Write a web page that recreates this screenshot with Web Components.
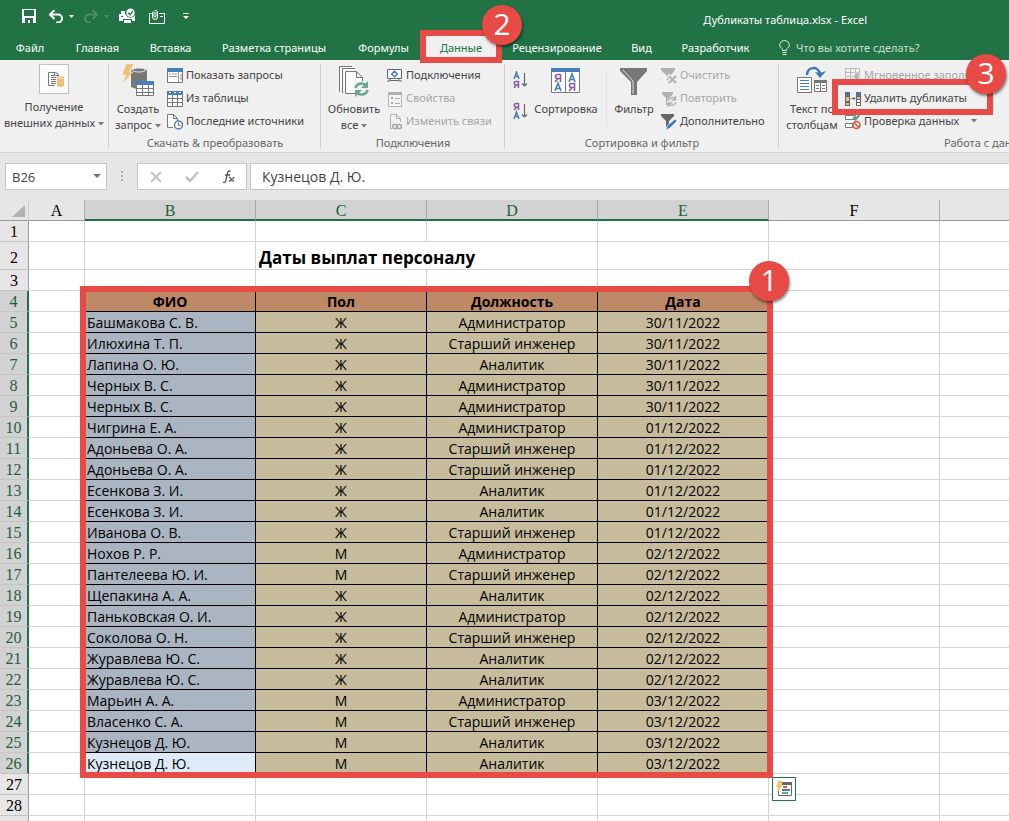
<!DOCTYPE html>
<html lang="ru">
<head>
<meta charset="utf-8">
<title>Дубликаты таблица.xlsx - Excel</title>
<style>
  html, body {
    height: 100%;
  }
  body {
    margin: 0;
    overflow: hidden;
    background: #fff;
    color: #444;
    font: 11px/16px "Noto Sans", "Open Sans", sans-serif;
    --green: #217346;
    --accent: #e84a45;
  }
</style>
</head>
<body>
<excel-window>
  <title-bar slot="title">Дубликаты таблица.xlsx - Excel</title-bar>

  <tab-strip slot="tabs">
    <ribbon-tab style="--tab: 60px">Файл</ribbon-tab>
    <ribbon-tab style="--tab: 75px">Главная</ribbon-tab>
    <ribbon-tab style="--tab: 71px">Вставка</ribbon-tab>
    <ribbon-tab style="--tab: 136px">Разметка страницы</ribbon-tab>
    <ribbon-tab style="--tab: 83px">Формулы</ribbon-tab>
    <ribbon-tab style="--tab: 72px" active>Данные
      <callout-frame slot="callout" number="2" style="inset: -6px -5px -6px -5px"></callout-frame>
    </ribbon-tab>
    <ribbon-tab style="--tab: 120px">Рецензирование</ribbon-tab>
    <ribbon-tab style="--tab: 49px">Вид</ribbon-tab>
    <ribbon-tab style="--tab: 99px">Разработчик</ribbon-tab>
    <tell-me></tell-me>
  </tab-strip>

  <ribbon-bar slot="ribbon">
    <ribbon-group style="--group: 109px">
      <ribbon-button large boxed icon="external">Получение<br>внешних данных <excel-icon name="caret"></excel-icon></ribbon-button>
    </ribbon-group>

    <ribbon-group style="--group: 212px" label="Скачать &amp; преобразовать">
      <ribbon-button large icon="query" style="--button: 58px">Создать<br>запрос <excel-icon name="caret"></excel-icon></ribbon-button>
      <button-stack>
        <ribbon-button icon="show">Показать запросы</ribbon-button>
        <ribbon-button icon="table">Из таблицы</ribbon-button>
        <ribbon-button icon="recent">Последние источники</ribbon-button>
      </button-stack>
    </ribbon-group>

    <ribbon-group style="--group: 184px" label="Подключения">
      <ribbon-button large icon="refresh" style="--button: 66px">Обновить<br>все <excel-icon name="caret"></excel-icon></ribbon-button>
      <button-stack>
        <ribbon-button icon="connections">Подключения</ribbon-button>
        <ribbon-button icon="properties" disabled>Свойства</ribbon-button>
        <ribbon-button icon="links" disabled>Изменить связи</ribbon-button>
      </button-stack>
    </ribbon-group>

    <ribbon-group style="--group: 274px" label="Сортировка и фильтр">
      <button-stack sort>
        <ribbon-button icon="az" title="Сортировка от А до Я"></ribbon-button>
        <ribbon-button icon="za" title="Сортировка от Я до А"></ribbon-button>
      </button-stack>
      <ribbon-button large icon="sort" style="--button: 68px">Сортировка</ribbon-button>
      <group-line></group-line>
      <ribbon-button large icon="filter" style="--button: 54px">Фильтр</ribbon-button>
      <button-stack>
        <ribbon-button icon="clear" disabled>Очистить</ribbon-button>
        <ribbon-button icon="reapply" disabled>Повторить</ribbon-button>
        <ribbon-button icon="advanced">Дополнительно</ribbon-button>
      </button-stack>
    </ribbon-group>

    <ribbon-group style="--group: 428px" label="Работа с данными">
      <ribbon-button large icon="columns" style="--button: 66px">Текст по<br>столбцам</ribbon-button>
      <button-stack>
        <ribbon-button icon="flash" disabled>Мгновенное заполнение</ribbon-button>
        <ribbon-button icon="duplicates">Удалить дубликаты
          <callout-frame slot="callout" number="3" style="inset: -8px auto -5px -13px; width: 161px; --badge-right: -13px"></callout-frame>
        </ribbon-button>
        <ribbon-button icon="validate" menu>Проверка данных</ribbon-button>
      </button-stack>
    </ribbon-group>
  </ribbon-bar>

  <formula-bar slot="formula" cell="B26" value="Кузнецов Д. Ю."></formula-bar>

  <sheet-grid slot="sheet">
    <callout-frame number="1" style="inset: 86px auto auto 80px; width: 693px; height: 492px; --badge-right: -16px"></callout-frame>
    <quick-analysis></quick-analysis>
  </sheet-grid>
</excel-window>

<script>
const ICONS = {
  caret: [6, 4, '<path d="M0 0h6L3 3.500z" fill="#777"/>'],
  save: [14, 14, '<path d="M0 0h14v14H0z" fill="#fff"/><path d="M2 1h10v6H2zM3 9h8v5H3z" fill="#217346"/><path d="M6 11h2v3H6z" fill="#fff"/>'],
  undo: [14, 13, '<path d="M5.500 0L1 4.500l4.500 4.500M1 4.500h8a4 4 0 0 1 0 8H7" fill="none" stroke="#fff" stroke-width="2"/>'],
  redo: [14, 13, '<path d="M8.500 0L13 4.500 8.500 9M13 4.500H5a4 4 0 0 0 0 8h2" fill="none" stroke="#4b8e69" stroke-width="2"/>'],
  tick: [5, 3, '<path d="M0 0h5L2.500 3z" fill="#fff"/>'],
  tickdim: [5, 3, '<path d="M0 0h5L2.500 3z" fill="#4b8e69"/>'],
  print: [17, 17, '<path d="M2 3h4v3h8v-1h2v8h-3v-2H4v2H0V6h2z" fill="#fff"/><path d="M4.500 11.500h8v4h-8z" fill="#fff" stroke="#217346"/><circle cx="11.500" cy="4.800" r="5" fill="#217346"/><circle cx="11.500" cy="4.800" r="4.200" fill="#fff"/><path d="M9.200 4.800l1.800 2 3-4" fill="none" stroke="#217346" stroke-width="1.300"/><path d="M2 8h2v1H2z" fill="#217346"/>'],
  mail: [17, 15, '<path d="M2.500 4.500h-2v10h15v-10H10M11 7.500h3" fill="none" stroke="#fff"/><path d="M3.500 3v5a2.500 2.500 0 0 0 5 0V2.500a2 2 0 0 0-3.500 0V7a1 1 0 0 0 2 0V3" fill="none" stroke="#fff"/>'],
  more: [6, 7, '<path d="M0 0h6v1H0zM0 3h6L3 6z" fill="#fff"/>'],
  bulb: [11, 15, '<path d="M3.500 10.500V9C2 8 .7 6.800.7 4.900a4.800 4.300 0 0 1 9.600 0C10.300 6.800 9 8 7.500 9v1.500zM3.500 12.500h4M3.500 14.500h4" fill="none" stroke="#e4efe8"/>'],
  external: [28, 28, '<path d="M15.500 10.500v-2l-3-2h-7v13h6M11.500 6.500v3h4" transform="translate(3 1)" fill="none" stroke="#777"/><path d="M11 10h3v1h-3zM11 12h5v1h-5zM11 14h5v1h-5zM11 16h5v1h-5zM11 18h5v1h-5z" fill="#777"/><path d="M17 13h7v8q-3.500 2-7 0z" fill="#efc07a"/><ellipse cx="20.500" cy="13" rx="3.500" ry="1.500" fill="#f6dcae" stroke="#efc07a"/>'],
  query: [34, 34, '<path d="M10 6q7-4 16 0v17q-8 4-16 0z" fill="#777"/><ellipse cx="18" cy="6" rx="6.500" ry="2" fill="#777" stroke="#e8e8e8"/><path d="M5 0h8L8 8h4L1 20l4-9H1z" fill="#f0c075" stroke="#f0f0f0" stroke-width=".5"/><path d="M15.500 18.500h17v13h-17z" fill="#fff" stroke="#777"/><path d="M15 17h18v4H15z" fill="#4680ba"/><path d="M21.500 21v11M27.500 21v11M15 24.500h18M15 28.500h18" stroke="#777"/>'],
  show: [16, 16, '<path d="M.5.500h15v14H.5z" fill="#fff" stroke="#777"/><path d="M0 0h16v4H0z" fill="#4680ba"/><path d="M2 6h2M5 6h2M8 6h2M2 8.500h8M11.500 4v10M13 7h2M13 9h2M13 11h2" stroke="#999"/>'],
  table: [16, 16, '<path d="M.5.500h15v15H.5z" fill="#fff" stroke="#777"/><path d="M0 0h16v4H0z" fill="#4680ba"/><path d="M2 1h2v1H2zM7 1h2v1H7zM12 1h2v1h-2z" fill="#fff"/><path d="M5.500 4v11M10.500 4v11M0 7.500h16M0 11.500h16" stroke="#777"/>'],
  recent: [16, 16, '<path d="M6 13.500H.5V.500h6l4 4V7M6.500.500v4h4" fill="#fff" stroke="#777"/><circle cx="11.500" cy="11" r="4" fill="#fff" stroke="#4680ba" stroke-width="1.500"/><path d="M11.500 8.500v3h2" fill="none" stroke="#777"/>'],
  refresh: [32, 32, '<g fill="#fafafa" stroke="#777"><path d="M14 1.500H1.500V27"/><path d="M17 3.500H4.500V28"/><path d="M7.500 6.500h11l6 6v16h-17zM18.500 6.500v6h6"/></g><circle cx="23.500" cy="24" r="8" fill="#f0f0f0"/><path d="M17.500 23a6 5.500 0 0 1 10-3M29.500 25a6 5.500 0 0 1-10 3" fill="none" stroke="#69a88f" stroke-width="2.500"/><path d="M30 16v7h-7zM17 32v-7h7z" fill="#69a88f"/>'],
  connections: [16, 16, '<path d="M.5 1.500h14v9H.5zM3 10.500v2h9v-2" fill="#fff" stroke="#666"/><path d="M7.500 3.200l2.800 2.800-2.800 2.800L4.700 6z" fill="#fff" stroke="#3b7cc0" stroke-width="1.500"/><path d="M0 13h3M12 13h3" stroke="#666"/>'],
  properties: [16, 16, '<path d="M1.500 1.500h13v14h-13z" fill="#f5f5f5" stroke="#b1b1b1"/><path d="M1 1h14v3H1z" fill="#b1b1b1"/><path d="M4 6h2v2H4zM4 11h2v2H4zM8 7h5v1H8zM8 12h5v1H8z" fill="#aaa"/>'],
  links: [16, 16, '<path d="M5 14.500H3.500V.500h6l4 4V8M9.500.500v4h4" fill="none" stroke="#b5adb8"/><rect x="5.500" y="10.500" width="5" height="4" rx="2" fill="none" stroke="#a6a6a6" stroke-width="1.500"/><rect x="9.500" y="10.500" width="5" height="4" rx="2" fill="none" stroke="#a6a6a6" stroke-width="1.500"/>'],
  az: [16, 18, '<path d="M1 8L3.500 1 6 8M2 5.500h3" fill="none" stroke="#4680ba" stroke-width="1.500"/><path d="M5.500 10v7M5.500 10.500H3a1.500 1.500 0 0 0 0 3.500h2.500M3.500 14L1 17" fill="none" stroke="#8c58a8" stroke-width="1.500"/><path d="M11.500 2v13M9 12.500l2.500 2.500 2.500-2.500" fill="none" stroke="#666" stroke-width="1.200"/>'],
  za: [16, 18, '<path d="M1 17L3.500 10 6 17M2 14.500h3" fill="none" stroke="#4680ba" stroke-width="1.500"/><path d="M5.500 1v7M5.500 1.500H3A1.500 1.500 0 0 0 3 5h2.500M3.500 5L1 8" fill="none" stroke="#8c58a8" stroke-width="1.500"/><path d="M11.500 2v13M9 12.500l2.500 2.500 2.500-2.500" fill="none" stroke="#666" stroke-width="1.200"/>'],
  sort: [30, 32, '<path d="M.5 3.500h28v24H.5z" fill="#fff" stroke="#777"/><path d="M0 3h29v4H0z" fill="#4680ba"/><path d="M14.500 7v21" stroke="#777"/><g fill="none" stroke-width="1.600"><path d="M4 26l3-8 3 8M5 23.500h4M18 17l3-8 3 8M19 14.500h4" stroke="#4680ba"/><path d="M9.500 9v8M9.500 9.500H6.500a2 2 0 0 0 0 4h3M7 13.500L4 17M23.500 18v8M23.500 18.500h-3a2 2 0 0 0 0 4h3M21 22.500L18 26" stroke="#8c58a8"/></g>'],
  filter: [28, 32, '<path d="M0 3h27v3L17 17v13h-6V17L0 6z" fill="#777"/><path d="M3 5l10 11v13" fill="none" stroke="#ddd"/>'],
  clear: [16, 16, '<path d="M0 0h14v2L9 8v7H6V8L0 2z" fill="#b1b1b1"/><path d="M7 7l8 8M15 7l-8 8" stroke="#f0f0f0" stroke-width="4"/><path d="M8 8l7 7M15 8l-7 7" stroke="#b1b1b1" stroke-width="2"/>'],
  reapply: [16, 16, '<path d="M1 1h11v2L8 7v7H5V7L1 3z" fill="#b1b1b1"/><circle cx="11" cy="10.500" r="5" fill="#f0f0f0"/><path d="M7 10a4 4 0 0 1 7-2M15 11a4 4 0 0 1-7 2M14.500 5v4h-4M7.500 16v-4h4" fill="none" stroke="#b1b1b1" stroke-width="1.500"/>'],
  advanced: [16, 16, '<path d="M0 0h13v2L8 7v6H5V7L0 2z" fill="#666"/><path d="M14 5l2 2-7 7-4 2 1-4z" fill="#3b7cc0" stroke="#f0f0f0" stroke-width=".7"/>'],
  columns: [32, 32, '<path d="M1.500 12.500h14v15h-14z" fill="#fff" stroke="#777"/><path d="M4 15.500h9M4 18.500h9M4 21.500h9M4 24.500h9" stroke="#4680ba"/><path d="M18.500 15.500h12v11h-12z" fill="#fff" stroke="#777"/><path d="M18 15h13v3H18z" fill="#777"/><path d="M24.500 18v9M20 20.500h3M26 20.500h3M20 23.500h3M26 23.500h3" stroke="#777"/><path d="M11 10c0-8 11-10 13-1" fill="none" stroke="#3b78b8" stroke-width="2.500"/><path d="M19 7l5 6 6-7-6 2z" fill="#3b78b8"/>'],
  flash: [16, 16, '<path d="M.5.500h14v12H.5zM.5 4.500h14M.5 8.500h14M5.500.500v12M10.500.500v12" fill="none" stroke="#bbb"/><path d="M10 5h6l-3 4h3l-8 7 2-6H8z" fill="#b1b1b1" stroke="#f0f0f0" stroke-width=".7"/>'],
  duplicates: [16, 16, '<path d="M0 1h5v14H0zM11 1h5v14h-5z" fill="#666"/><path d="M1 2h3v3H1zM12 2h3v3h-3z" fill="#3b7cc0"/><path d="M1 6h3v4H1zM1 12h3v2H1zM12 6h3v2h-3z" fill="#f0c075"/><path d="M12 9h3v2h-3zM12 12h3v2h-3z" fill="#fff"/><path d="M6 7.500h4M8.500 6L10 7.500 8.500 9" fill="none" stroke="#3b7cc0"/>'],
  validate: [16, 16, '<path d="M.5 1.500h10v4H.5zM.5 9.500h7v4H.5z" fill="#fff" stroke="#777"/><path d="M8 3l2.500 2.500L15 0" fill="none" stroke="#4fa07d" stroke-width="2"/><circle cx="11.500" cy="11" r="3.500" fill="#f0f0f0" stroke="#d9583b" stroke-width="1.500"/><path d="M9 8.500l5 5" stroke="#d9583b" stroke-width="1.500"/>'],
  namecaret: [8, 5, '<path d="M0 0h8L4 4z" fill="#777"/>'],
  grip: [3, 11, '<path d="M0 0h2v2H0zM0 4h2v2H0zM0 8h2v2H0z" fill="#aaa"/>'],
  cancel: [12, 12, '<path d="M1 1l10 10M11 1L1 11" stroke="#c3c3c3" stroke-width="2"/>'],
  enter: [14, 12, '<path d="M1 6l4 4L13 1" fill="none" stroke="#c3c3c3" stroke-width="2.500"/>'],
  fx: [13, 14, '<path d="M8.500 1.500C6.500 0 5.500 2 5 5L4 10c-.5 2.500-1.500 3-3 2M3 5h5" fill="none" stroke="#555" stroke-width="1.300"/><path d="M7 7.500c2-1 2 4 4 3.500l1-.5M12.500 7.200L7 11.500" fill="none" stroke="#555" stroke-width="1.200"/>'],
  corner: [13, 12, '<path d="M13 0v12H0z" fill="#b1b1b1"/>'],
  analysis: [18, 18, '<path d="M7 3h9.500v12.500h-13V11" fill="none" stroke="#666"/><path d="M7 2h10v3H7z" fill="#666"/><path d="M8 6h4v2H8z" fill="#d9583b"/><path d="M7 9h8v2H7z" fill="#3b7cc0"/><path d="M7 12h6v2H7z" fill="#62a98a"/><path d="M3 1h5L6 5h2L2 13l1-6H1z" fill="#f0c075"/>']
};

const ROWS = [
  ['Башмакова С. В.', 'Ж', 'Администратор', '30/11/2022'],
  ['Илюхина Т. П.', 'Ж', 'Старший инженер', '30/11/2022'],
  ['Лапина О. Ю.', 'Ж', 'Аналитик', '30/11/2022'],
  ['Черных В. С.', 'Ж', 'Администратор', '30/11/2022'],
  ['Черных В. С.', 'Ж', 'Администратор', '30/11/2022'],
  ['Чигрина Е. А.', 'Ж', 'Администратор', '01/12/2022'],
  ['Адоньева О. А.', 'Ж', 'Старший инженер', '01/12/2022'],
  ['Адоньева О. А.', 'Ж', 'Старший инженер', '01/12/2022'],
  ['Есенкова З. И.', 'Ж', 'Аналитик', '01/12/2022'],
  ['Есенкова З. И.', 'Ж', 'Аналитик', '01/12/2022'],
  ['Иванова О. В.', 'Ж', 'Старший инженер', '01/12/2022'],
  ['Нохов Р. Р.', 'М', 'Администратор', '02/12/2022'],
  ['Пантелеева Ю. И.', 'М', 'Старший инженер', '02/12/2022'],
  ['Щепакина А. А.', 'Ж', 'Аналитик', '02/12/2022'],
  ['Паньковская О. И.', 'Ж', 'Администратор', '02/12/2022'],
  ['Соколова О. Н.', 'Ж', 'Старший инженер', '02/12/2022'],
  ['Журавлева Ю. С.', 'Ж', 'Аналитик', '02/12/2022'],
  ['Журавлева Ю. С.', 'Ж', 'Аналитик', '02/12/2022'],
  ['Марьин А. А.', 'М', 'Администратор', '03/12/2022'],
  ['Власенко С. А.', 'М', 'Старший инженер', '03/12/2022'],
  ['Кузнецов Д. Ю.', 'М', 'Аналитик', '03/12/2022'],
  ['Кузнецов Д. Ю.', 'М', 'Аналитик', '03/12/2022']
];

class BaseElement extends HTMLElement {
  constructor() {
    super();
    this.attachShadow({ mode: 'open' });
  }

  connectedCallback() {
    this.shadowRoot.innerHTML = this.render();
  }
}

class ExcelIcon extends BaseElement {
  render() {
    const [width, height, shapes] = ICONS[this.getAttribute('name')];
    return `
      <style>
        :host { display: inline-flex; flex: none; vertical-align: middle; }
        svg { display: block; }
      </style>
      <svg width="${width}" height="${height}" viewBox="0 0 ${width} ${height}" aria-hidden="true">${shapes}</svg>
    `;
  }
}

class ExcelWindow extends BaseElement {
  render() {
    return `
      <style>
        :host { display: flex; flex-direction: column; height: 100%; overflow: hidden; }
        header { background: var(--green); color: #fff; }
        main { flex: 1; min-height: 0; overflow: hidden; }
      </style>
      <header><slot name="title"></slot><slot name="tabs"></slot></header>
      <slot name="ribbon"></slot>
      <slot name="formula"></slot>
      <main><slot name="sheet"></slot></main>
    `;
  }
}

class TitleBar extends BaseElement {
  render() {
    return `
      <style>
        :host { display: flex; align-items: center; height: 36px; }
        nav { flex: 1; display: flex; align-items: center; padding: 0 0 4px 22px; }
        button { display: flex; align-items: center; gap: 6px; padding: 0; margin-right: 13px; border: 0; background: none; }
        button.wide { margin-right: 10px; }
        button:last-child { margin-left: 4px; }
        .title { padding: 4px 142px 0 0; }
      </style>
      <nav>
        <button aria-label="Сохранить"><excel-icon name="save"></excel-icon></button>
        <button class="wide" aria-label="Отменить"><excel-icon name="undo"></excel-icon><excel-icon name="tick"></excel-icon></button>
        <button class="wide" aria-label="Вернуть"><excel-icon name="redo"></excel-icon><excel-icon name="tickdim"></excel-icon></button>
        <button aria-label="Просмотр и печать"><excel-icon name="print"></excel-icon></button>
        <button aria-label="Электронная почта"><excel-icon name="mail"></excel-icon></button>
        <button aria-label="Настройка панели"><excel-icon name="more"></excel-icon></button>
      </nav>
      <div class="title"><slot></slot></div>
    `;
  }
}

class TabStrip extends BaseElement {
  render() {
    return `
      <style>
        :host { display: flex; height: 24px; }
      </style>
      <slot></slot>
    `;
  }
}

class RibbonTab extends BaseElement {
  render() {
    return `
      <style>
        :host { display: block; position: relative; flex: 0 0 var(--tab); height: 21px; }
        :host([active]) { z-index: 2; }
        button {
          display: block; width: 100%; height: 100%; padding: 2px 0 0;
          border: 0; background: none; color: #fff; font: inherit; white-space: nowrap;
        }
        :host([active]) button { background: #f0f0f0; color: var(--green); }
      </style>
      <button><slot></slot></button>
      <slot name="callout"></slot>
    `;
  }
}

class TellMe extends BaseElement {
  render() {
    return `
      <style>
        :host { display: block; flex: 1; padding-left: 14px; }
        label { display: flex; align-items: center; gap: 6px; height: 22px; }
        input { flex: 1; min-width: 0; padding: 2px 0 0; border: 0; outline: 0; background: none; color: #fff; font: inherit; }
        input::placeholder { color: #c9dfd1; opacity: 1; }
      </style>
      <label><excel-icon name="bulb"></excel-icon><input aria-label="Помощник" placeholder="Что вы хотите сделать?"></label>
    `;
  }
}

class RibbonBar extends BaseElement {
  render() {
    return `
      <style>
        :host { display: flex; height: 92px; background: #f0f0f0; border-bottom: 1px solid #d2d2d2; }
      </style>
      <slot></slot>
    `;
  }
}

class RibbonGroup extends BaseElement {
  render() {
    return `
      <style>
        :host {
          display: flex; flex-direction: column; flex: 0 0 var(--group); box-sizing: border-box;
          padding: 4px 0 1px; position: relative;
        }
        :host::after { content: ""; position: absolute; top: 4px; right: 0; bottom: 4px; width: 1px; background: #d2d2d2; }
        .items { display: flex; flex: 1; }
        .label { color: #666; text-align: center; white-space: nowrap; }
      </style>
      <div class="items"><slot></slot></div>
      <div class="label">${this.getAttribute('label') || ''}</div>
    `;
  }
}

class GroupLine extends BaseElement {
  render() {
    return `
      <style>
        :host { display: block; width: 1px; height: 56px; margin: 6px 0 0 6px; background: #e0e0e0; }
      </style>
    `;
  }
}

class ButtonStack extends BaseElement {
  render() {
    return `
      <style>
        :host { display: flex; flex-direction: column; }
        :host([sort]) { gap: 8px; padding: 5px 0 0 8px; }
      </style>
      <slot></slot>
    `;
  }
}

class RibbonButton extends BaseElement {
  render() {
    const disabled = this.hasAttribute('disabled') ? 'disabled' : '';
    const title = this.getAttribute('title');
    return `
      <style>
        :host { display: block; position: relative; }
        button {
          display: flex; align-items: center; gap: 3px; height: 23px; padding: 0 0 1px;
          border: 0; background: none; color: inherit; font: inherit; white-space: nowrap;
        }
        button:disabled { color: #a6a6a6; }
        .menu { margin-left: 9px; }
        :host([large]) { flex: 0 0 var(--button, 108px); }
        :host([large]) button { flex-direction: column; width: 100%; height: auto; gap: 3px; }
        :host([large]) .icon { display: flex; justify-content: center; align-items: center; height: 34px; }
        :host([boxed]) button { gap: 5px; }
        :host([boxed]) .icon { width: 28px; height: 28px; border: 1px solid #c0c0c0; background: #fbfbfb; }
      </style>
      <button ${disabled} ${title ? `aria-label="${title}"` : ''}>
        <span class="icon"><excel-icon name="${this.getAttribute('icon')}"></excel-icon></span>
        <span><slot></slot></span>
        ${this.hasAttribute('menu') ? '<excel-icon class="menu" name="caret"></excel-icon>' : ''}
      </button>
      <slot name="callout"></slot>
    `;
  }
}

class FormulaBar extends BaseElement {
  render() {
    return `
      <style>
        :host {
          display: flex; align-items: center; height: 27px; padding: 10px 0 10px 5px; background: #e6e6e6;
          font: 14px/20px "Open Sans", "Noto Sans", sans-serif;
        }
        .box { display: flex; align-items: center; box-sizing: border-box; height: 27px; border: 1px solid #c6c6c6; background: #fff; }
        .name { width: 102px; padding: 0 5px 0 6px; font-size: 13px; }
        .actions { width: 110px; justify-content: space-around; margin-right: 3px; }
        .value { flex: 1; border-right: 0; padding-left: 11px; }
        .grip { display: flex; justify-content: center; width: 30px; }
        input { flex: 1; min-width: 0; padding: 0; border: 0; outline: 0; background: none; color: #444; font: inherit; }
        button { display: flex; padding: 0; border: 0; background: none; }
      </style>
      <div class="box name">
        <input aria-label="Имя" value="${this.getAttribute('cell')}">
        <button aria-label="Список имён"><excel-icon name="namecaret"></excel-icon></button>
      </div>
      <div class="grip"><excel-icon name="grip"></excel-icon></div>
      <div class="box actions">
        <button aria-label="Отмена"><excel-icon name="cancel"></excel-icon></button>
        <button aria-label="Ввод"><excel-icon name="enter"></excel-icon></button>
        <button aria-label="Вставить функцию"><excel-icon name="fx"></excel-icon></button>
      </div>
      <div class="box value"><input aria-label="Строка формул" value="${this.getAttribute('value')}"></div>
    `;
  }
}

class SheetGrid extends BaseElement {
  row(number, cells, className = '') {
    return `<tr class="${className}"><th scope="row">${number}</th><td></td>${cells}<td></td><td></td></tr>`;
  }

  render() {
    const blank = '<td></td>'.repeat(4);
    const header = ['ФИО', 'Пол', 'Должность', 'Дата'].map(name => `<td class="head">${name}</td>`).join('');
    const body = ROWS.map((cells, index) => {
      const last = index === ROWS.length - 1 ? ' current' : '';
      return this.row(index + 5, cells.map(text => `<td>${text}</td>`).join(''), 'data' + last);
    }).join('');
    const columns = ['B', 'C', 'D', 'E'].map(name => `<th class="picked" scope="col">${name}</th>`).join('');

    return `
      <style>
        :host { display: block; position: relative; }
        table {
          width: 100%; table-layout: fixed; border-collapse: separate; border-spacing: 0;
          color: #000; font: 14px/18px "Open Sans", "Noto Sans", sans-serif;
        }
        th, td { box-sizing: border-box; height: 21px; padding: 2px 0 0; border: 0 solid #d4d4d4; border-width: 0 1px 1px 0; white-space: nowrap; overflow: hidden; }
        th { background: #e6e6e6; font: 16px/18px "Liberation Serif", serif; text-align: center; }
        tr > :last-child { border-right: 0; }
        thead th { border-bottom-color: #9b9b9b; border-right-color: #ababab; }
        thead th:first-child { border-right-color: #d0d0d0; }
        thead th.picked { border-bottom: 2px solid var(--green); background: #d2d2d2; color: #1d6040; line-height: 17px; }
        .corner { display: flex; justify-content: flex-end; padding-right: 3px; }
        tbody th { border-bottom-color: #c4c4c4; border-right-color: #9b9b9b; }
        .data th, .top th { border-right: 2px solid var(--green); background: #d2d2d2; color: #1d6040; }
        .tall td, .tall th { height: 28px; padding-top: 4px; }
        .title { padding-left: 3px; font-size: 17px; font-weight: bold; }
        .head { background: #bd8966; font-weight: bold; text-align: center; border-color: #000; }
        .data td:nth-child(n+3):nth-child(-n+6) { background: #c6bc9b; border-color: #000; text-align: center; }
        .data td:nth-child(3):nth-child(3) { background: #abb5c1; text-align: left; padding-left: 2px; }
        .current td:nth-child(3):nth-child(3) { background: #ddebf7; }
      </style>
      <table>
        <colgroup>
          <col style="width: 29px"><col style="width: 56px">
          <col style="width: 171px"><col style="width: 171px"><col style="width: 171px"><col style="width: 171px"><col style="width: 171px">
          <col>
        </colgroup>
        <thead>
          <tr><th><div class="corner"><excel-icon name="corner"></excel-icon></div></th><th scope="col">A</th>${columns}<th scope="col">F</th><th></th></tr>
        </thead>
        <tbody>
          ${this.row(1, blank)}
          ${this.row(2, '<td></td><td class="title" colspan="2">Даты выплат персоналу</td><td></td>', 'tall')}
          ${this.row(3, blank)}
          ${this.row(4, header, 'top')}
          ${body}
          ${this.row(27, blank)}
          ${this.row(28, blank)}
          ${this.row('', blank)}
        </tbody>
      </table>
      <slot></slot>
    `;
  }
}

class QuickAnalysis extends BaseElement {
  render() {
    return `
      <style>
        :host { display: block; position: absolute; top: 577px; left: 772px; }
        button { display: flex; align-items: center; justify-content: center; width: 24px; height: 24px; padding: 0; border: 1px solid var(--green); background: #fff; }
      </style>
      <button aria-label="Быстрый анализ"><excel-icon name="analysis"></excel-icon></button>
    `;
  }
}

class CalloutFrame extends BaseElement {
  render() {
    return `
      <style>
        :host { display: block; position: absolute; z-index: 3; box-sizing: border-box; border: 6px solid var(--accent); pointer-events: none; }
        .badge {
          position: absolute; top: -31px; right: calc(var(--badge-right, -20px) - 6px);
          width: 40px; height: 40px; border-radius: 50%; background: var(--accent); color: #fff;
          box-shadow: 1px 2px 3px rgba(0, 0, 0, .5);
          font: 30px/38px "Open Sans", sans-serif; text-align: center;
        }
      </style>
      <div class="badge">${this.getAttribute('number')}</div>
    `;
  }
}

customElements.define('excel-icon', ExcelIcon);
customElements.define('excel-window', ExcelWindow);
customElements.define('title-bar', TitleBar);
customElements.define('tab-strip', TabStrip);
customElements.define('ribbon-tab', RibbonTab);
customElements.define('tell-me', TellMe);
customElements.define('ribbon-bar', RibbonBar);
customElements.define('ribbon-group', RibbonGroup);
customElements.define('group-line', GroupLine);
customElements.define('button-stack', ButtonStack);
customElements.define('ribbon-button', RibbonButton);
customElements.define('formula-bar', FormulaBar);
customElements.define('sheet-grid', SheetGrid);
customElements.define('quick-analysis', QuickAnalysis);
customElements.define('callout-frame', CalloutFrame);
</script>
</body>
</html>
